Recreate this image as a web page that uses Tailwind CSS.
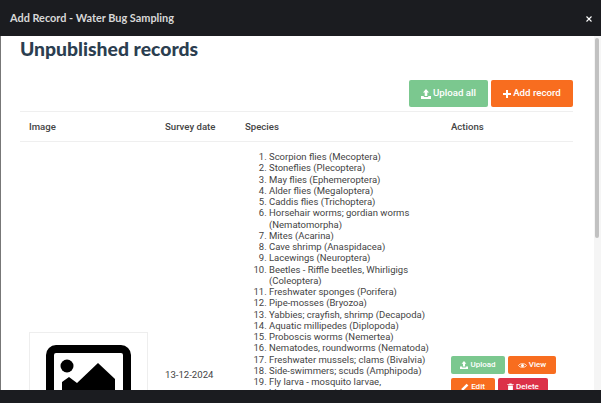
<!DOCTYPE html>
<html lang="en">
<head>
  <meta charset="UTF-8" />
  <title>Add Record - Water Bug Sampling</title>
  <script src="https://cdn.jsdelivr.net/npm/@tailwindcss/browser@4"></script>
</head>
<body class="bg-[#1b1c20] overflow-hidden">
  <div class="w-[601px] h-[403px] flex flex-col overflow-hidden font-['Roboto',sans-serif]">
    <!-- modal header -->
    <div class="h-[36px] shrink-0 bg-[#1b1c20] flex items-center justify-between pl-[10px] pr-[9px]">
      <span class="font-['Lato',sans-serif] font-bold text-[10.9px] text-[#d8d8d8]">Add Record - Water Bug Sampling</span>
      <svg width="6" height="6" viewBox="0 0 6 6" class="mt-[1px]"><path d="M.5.5l5 5M5.5.5l-5 5" stroke="#fff" stroke-width="1.1"/></svg>
    </div>

    <!-- modal body -->
    <div class="h-[354px] shrink-0 flex bg-white border-l border-[#777] overflow-hidden">
      <div class="w-[593px] shrink-0 pl-[19px] pr-[21px]">
        <h1 class="font-['Lato',sans-serif] font-black text-[19.35px] leading-[26px] text-[#2b3e50]">Unpublished records</h1>
        <div class="flex justify-end gap-[3px] mt-[18px] h-[27px]">
          <button class="w-[79px] h-[27px] rounded-[2px] bg-[#7bc88f] text-white text-[9.7px] font-medium flex items-center justify-center gap-[2px]">
            <svg width="10" height="10" viewBox="0 0 10 10" fill="#fff"><path d="M5 0 8 3.4H6.3V7H3.7V3.4H2Z"/><path d="M0 7h2.8v1h4.4V7H10v3H0Z"/></svg>
            Upload all
          </button>
          <button class="w-[82px] h-[27px] rounded-[2px] bg-[#f86d1f] text-white text-[9.7px] font-medium flex items-center justify-center gap-[2px]">
            <svg width="8" height="8" viewBox="0 0 8 8" fill="#fff"><path d="M3 0h2v3h3v2H5v3H3V5H0V3h3Z"/></svg>
            Add record
          </button>
        </div>
        <div class="mt-[4px] border-t border-[#efefef] h-[30px] pt-[1px] flex items-center text-[9.6px] font-medium text-[#444]">
          <span class="w-[145px] pl-[9px]">Image</span>
          <span class="w-[80px]">Survey date</span>
          <span class="w-[206px]">Species</span>
          <span>Actions</span>
        </div>
        <div class="border-t border-[#efefef] flex h-[300px]">
          <div class="w-[145px] pl-[9px] pt-[190px] shrink-0">
            <div class="w-[119px] h-[100px] border border-[#eee] flex justify-center pt-[12px]">
              <svg width="85" height="85" viewBox="0 0 85 85" class="shrink-0">
                <rect x="4" y="4" width="77" height="77" rx="6" fill="none" stroke="#000" stroke-width="8"/>
                <circle cx="21" cy="21" r="6.5" fill="#000"/>
                <path d="M16 45V37L23 32 31 38 52 18 69 34V70H16Z" fill="#000"/>
              </svg>
            </div>
          </div>
          <div class="w-[80px] shrink-0 pt-[226px] text-[9.6px] text-[#444]">13-12-2024</div>
          <ol class="w-[206px] shrink-0 pt-[9px] pl-[24px] pr-[16px] list-decimal text-[9.5px] leading-[11.25px] text-[#444]">
            <li>Scorpion flies (Mecoptera)</li>
            <li>Stoneflies (Plecoptera)</li>
            <li>May flies (Ephemeroptera)</li>
            <li>Alder flies (Megaloptera)</li>
            <li>Caddis flies (Trichoptera)</li>
            <li>Horsehair worms; gordian worms (Nematomorpha)</li>
            <li>Mites (Acarina)</li>
            <li>Cave shrimp (Anaspidacea)</li>
            <li>Lacewings (Neuroptera)</li>
            <li>Beetles - Riffle beetles, Whirligigs (Coleoptera)</li>
            <li>Freshwater sponges (Porifera)</li>
            <li>Pipe-mosses (Bryozoa)</li>
            <li>Yabbies; crayfish, shrimp (Decapoda)</li>
            <li>Aquatic millipedes (Diplopoda)</li>
            <li>Proboscis worms (Nemertea)</li>
            <li>Nematodes, roundworms (Nematoda)</li>
            <li>Freshwater mussels; clams (Bivalvia)</li>
            <li>Side-swimmers; scuds (Amphipoda)</li>
            <li>Fly larva - mosquito larvae, bloodworms, midges</li>
          </ol>
          <div class="pt-[214px] flex flex-col gap-[4px] text-[8px] font-medium text-white">
            <div class="flex gap-[3px]">
              <button class="w-[54px] h-[18px] rounded-[2px] bg-[#7bc88f] flex items-center justify-center gap-[2px]">
                <svg width="8" height="8" viewBox="0 0 10 10" fill="#fff"><path d="M5 0 8 3.4H6.3V7H3.7V3.4H2Z"/><path d="M0 7h2.8v1h4.4V7H10v3H0Z"/></svg>
                Upload
              </button>
              <button class="w-[48px] h-[18px] rounded-[2px] bg-[#f86d1f] flex items-center justify-center gap-[2px]">
                <svg width="9" height="7" viewBox="0 0 18 12"><path d="M1 6C4 1 14 1 17 6 14 11 4 11 1 6Z" fill="none" stroke="#fff" stroke-width="1.6"/><circle cx="9" cy="6" r="3" fill="#fff"/></svg>
                View
              </button>
            </div>
            <div class="flex gap-[3px]">
              <button class="w-[44px] h-[18px] rounded-[2px] bg-[#f86d1f] flex items-center justify-center gap-[2px]">
                <svg width="8" height="8" viewBox="0 0 10 10" fill="#fff"><path d="M7 0.8 9.2 3 3.2 9 0.5 9.5 1 6.8Z"/></svg>
                Edit
              </button>
              <button class="w-[50px] h-[18px] rounded-[2px] bg-[#dc3148] flex items-center justify-center gap-[2px]">
                <svg width="7" height="8" viewBox="0 0 8 10" fill="#fff"><path d="M0 1.5h2.5V.5h3v1H8v1H0ZM1 3.2h6V10H1Z"/></svg>
                Delete
              </button>
            </div>
          </div>
        </div>
      </div>
      <!-- scrollbar -->
      <div class="w-[7px] shrink-0 bg-[#f5f5f5] pt-[2px] pl-[1px]">
        <div class="w-[4px] h-[200px] rounded-full bg-[#c1c1c1]"></div>
      </div>
    </div>

    <!-- modal footer -->
    <div class="flex-1 bg-[#1b1c20]"></div>
  </div>
</body>
</html>
